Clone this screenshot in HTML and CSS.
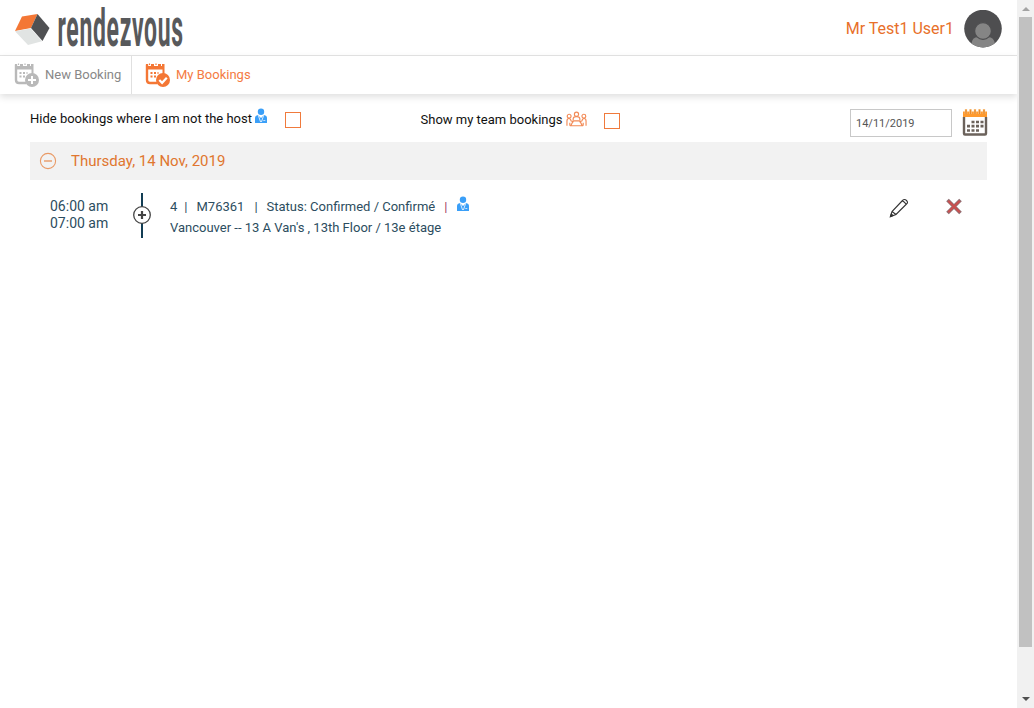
FILE: index.html
```html
<!DOCTYPE html>
<html lang="en">
<head>
<meta charset="utf-8">
<title>My Bookings</title>
<link rel="stylesheet" href="styles.css">
</head>
<body>
<svg width="0" height="0" class="defs">
  <symbol id="host" viewBox="0 0 14 16">
    <circle cx="7" cy="3.7" r="3.2" fill="#3a9ff8"/>
    <path d="M1 15V10Q1 7.500 4 7L7 10 10 7Q13 7.500 13 10V15Z" fill="#3a9ff8"/>
    <path d="M4.300 7.300 6.600 14M9.700 7.300 7.400 14" stroke="#fff" stroke-width=".8" fill="none"/><path d="M9.300 12.500h2" stroke="#fff" stroke-width=".7"/>
  </symbol>
  <symbol id="cal" viewBox="0 0 26 26">
    <path d="M2 1.500V17Q2 20 5 20H12" fill="none" stroke="currentColor" stroke-width="2.400"/>
    <path d="M1 1H3V3H6V1H9V3H13V1H16V3H17V1H19.500V11H17.500V6.500H3V5H1Z" fill="currentColor"/>
    <path d="M4.500 .5V2M11 .5V2" stroke="currentColor" stroke-width="1.200"/>
    <path d="M5.500 10h2M9 10h2M12.500 10h1M5.500 13.500h2M9 13.500h2" stroke="currentColor" stroke-width="2"/>
    <circle cx="18" cy="17" r="7" fill="currentColor"/>
  </symbol>
</svg>
<div class="page">
  <main class="content">
    <header class="top">
      <svg class="logo" width="172" height="48" viewBox="14 0 172 48">
        <path d="M22 16.500 37.500 14 31 28 15 31Z" fill="#f47735"/>
        <path d="M37.500 14 49.500 28 42.500 41 31 28Z" fill="#505153"/>
        <path d="M15 31.300 30.800 28.500 42 41.200 28 45Z" fill="#e1e4e3"/>
        <text class="wordmark" transform="translate(57.500 45.500) scale(.45 1)" textLength="279" lengthAdjust="spacing">rendezvous</text>
      </svg>
      <div class="user">
        <span class="user-name">Mr Test1 User1</span>
        <svg width="38" height="38" viewBox="0 0 38 38">
          <clipPath id="face"><circle cx="19" cy="18.600" r="18.800"/></clipPath>
          <g clip-path="url(#face)"><path d="M0 0H38V38H0Z" fill="#4e4e50"/>
          <path d="M7.500 38V34Q8 27 14 27H24Q30 27 31 34V38Z" fill="#858585"/>
          <circle cx="19" cy="21" r="8.400" fill="#858585" stroke="#4e4e50" stroke-width="1.200"/></g>
        </svg>
      </div>
    </header>
    <nav class="menu">
      <a class="item new"><svg width="26" height="26"><use href="#cal"/><path d="M18 13v8M14 17h8" stroke="#fff" stroke-width="2"/></svg><span>New Booking</span></a>
      <a class="item mine"><svg width="26" height="26"><use href="#cal"/><path d="M14.300 17l2.800 2.800 4.700-5" stroke="#fff" stroke-width="2.200" fill="none"/></svg><span>My Bookings</span></a>
    </nav>
    <section class="filters">
      <div class="hide"><span class="hide-text">Hide bookings where I am not the host</span><svg class="host" width="14" height="16"><use href="#host"/></svg><span class="box"></span></div>
      <div class="team"><span class="team-text">Show my team bookings</span>
        <svg class="group" width="21" height="17" viewBox="0 0 22 17" fill="none" stroke="#f28a56" stroke-width="1.200">
          <circle cx="11" cy="3" r="2.200"/><path d="M7.500 9V7.500Q8 5.500 11 5.500T14.500 7.500V9"/>
          <circle cx="3.300" cy="5" r="2"/><circle cx="18.700" cy="5" r="2"/>
          <path d="M1 15V10Q1 7.500 3 7.500T5.300 10L8 11M21 15V10Q21 7.500 19 7.500T16.700 10L14 11M4 15V12M18 15V12M5 15L7.500 10H14.500L17 15Z"/>
        </svg><span class="box"></span></div>
      <div class="date"><span class="field">14/11/2019</span>
        <svg width="26" height="29" viewBox="0 0 26 29">
          <path d="M2 9V25.500Q2 26.500 3 26.500H23Q24 26.500 24 25.500V9" fill="#fff" stroke="#6b625b" stroke-width="2.400"/>
          <path d="M1 3.500H25V9H1Z" fill="#ff9a2e"/>
          <path d="M4 1V6M8.500 1V6M13 1V6M17.500 1V6M22 1V6" stroke="#ffd9a8" stroke-width="2.400"/>
          <path d="M4 1.500V6M8.500 1.500V6M13 1.500V6M17.500 1.500V6M22 1.500V6" stroke="#e8892b" stroke-width="1.600"/>
          <path d="M9.500 14H22M5 18.200H22M5 22.500H17.500" stroke="#6b625b" stroke-width="2.700" stroke-dasharray="3 1.500"/>
        </svg></div>
    </section>
    <section class="day">
      <svg width="18" height="18" viewBox="0 0 18 18" fill="none" stroke="#e99a66"><circle cx="9" cy="9" r="7.600" stroke-width="1.100"/><path d="M5 9h8" stroke-width="1.400"/></svg>
      <span>Thursday, 14 Nov, 2019</span>
    </section>
    <article class="booking">
      <div class="times"><span>06:00 am</span><span>07:00 am</span></div>
      <svg class="mark" width="20" height="46" viewBox="0 0 20 46"><path d="M10 0V45" stroke="#123d54" stroke-width="2"/><circle cx="10" cy="22" r="8.300" fill="#fff" stroke="#444" stroke-width="1.300"/><path d="M10 18v8M6 22h8" stroke="#444" stroke-width="2.200"/></svg>
      <div class="info">
        <div class="line"><span class="count">4</span><span class="bar1">|</span><span class="code">M76361</span><span class="bar2">|</span><span class="status">Status: Confirmed / Confirmé</span><span class="bar3">|</span><svg width="14" height="16"><use href="#host"/></svg></div>
        <div class="place">Vancouver -- 13 A Van's , 13th Floor / 13e étage</div>
      </div>
      <svg class="edit" width="20" height="20" viewBox="0 0 20 20" fill="none" stroke="#333" stroke-width="1.100"><path d="M1.500 18.500 3 13.500 13.500 2.500Q15.500.5 17.500 2.500T17.500 6L7 16.500ZM3 13.500 7 16.500M13.500 2.500l4 3.800"/><path d="M1.500 18.500l.8-2.500 1.700 1.500Z" fill="#333"/></svg>
      <svg class="delete" width="18" height="18" viewBox="0 0 18 18"><path d="M2.500 3 15.500 16M15.500 3 2.500 16" stroke="#8f7074" stroke-width="3.700"/><path d="M3.200 3.700 14.800 15.300M14.800 3.700 3.200 15.300" stroke="#c9504f" stroke-width="2.200"/></svg>
    </article>
  </main>
  <aside class="scroll"><i class="up"></i><i class="thumb"></i><i class="down"></i></aside>
</div>
</body>
</html>
```
FILE: styles.css
```css
* { box-sizing: border-box; }
body { margin: 0; overflow: hidden; background: #fff; font-family: Roboto, "Liberation Sans", sans-serif; font-size: 13px; color: #222; }
svg { display: block; flex: none; }
span { white-space: nowrap; }
.defs { position: absolute; }
.page { display: flex; height: 708px; }
.content { width: 1017px; }
.top { display: flex; justify-content: space-between; height: 56px; padding: 0 15px 0 14px; border-bottom: 1px solid #e5e5e5; }
.logo { overflow: visible; }
.wordmark { font: 700 51px Roboto, sans-serif; fill: #58595b; }
.user { display: flex; gap: 10px; padding-top: 10px; }
.user-name { font-size: 16px; line-height: 37px; color: #e8702a; }
.menu { display: flex; height: 38px; box-shadow: 0 3px 7px rgba(0,0,0,.13); }
.item { display: flex; line-height: 37px; }
.item svg { margin-top: 7px; }
.new { width: 132px; padding-left: 14px; gap: 5px; border-right: 1px solid #e0e0e0; color: #888; }
.new svg { color: #b9b9b9; }
.mine { padding-left: 13px; gap: 5px; color: #f47b43; }
.mine svg { color: #f47735; }
.filters { display: flex; height: 48px; padding: 14px 29px 0 30px; line-height: 20px; color: #111; }
.hide { display: flex; width: 391px; }
.hide-text, .team-text { padding-top: 1px; }
.host { margin-left: 2px; }
.box { width: 16px; height: 16px; margin: 4px 0 0 17px; border: 1px solid #f07a3c; }
.team { display: flex; width: 430px; padding-top: 1px; }
.group { margin: 2px 0 0 3px; }
.date { display: flex; gap: 10px; }
.field { width: 102px; height: 28px; margin-top: 1px; border: 1px solid #c8c8c8; padding-left: 5px; font-size: 11px; line-height: 27px; color: #555; }
.day { display: flex; align-items: center; gap: 14px; width: 957px; height: 38px; margin-left: 30px; padding-left: 9px; background: #f2f2f2; color: #e0762f; font-size: 15px; }
.booking { display: flex; padding: 13px 0 0 50px; color: #2c4d60; }
.times { display: flex; flex-direction: column; width: 82px; padding-top: 5px; font-size: 14px; line-height: 17px; }
.info { width: 719px; padding: 3px 0 0 18px; line-height: 21px; }
.line { display: flex; }
.line svg { margin-left: 9px; }
.bar1 { margin: 0 9px 0 7px; }
.bar2 { margin: 0 9px 0 10px; }
.bar3 { margin-left: 9px; color: #a3405e; }
.edit { margin: 5px 0 0 18px; }
.delete { margin: 4px 0 0 36px; }
.scroll { display: flex; flex-direction: column; align-items: center; width: 17px; background: #f1f1f1; }
.up { margin: 7px 0 6px; border: 4px solid transparent; border-top: 0; border-bottom: 4px solid #a3a3a3; }
.thumb { width: 13px; height: 630px; background: #c1c1c1; }
.down { margin-top: 50px; border: 4px solid transparent; border-bottom: 0; border-top: 4px solid #505050; }
```
